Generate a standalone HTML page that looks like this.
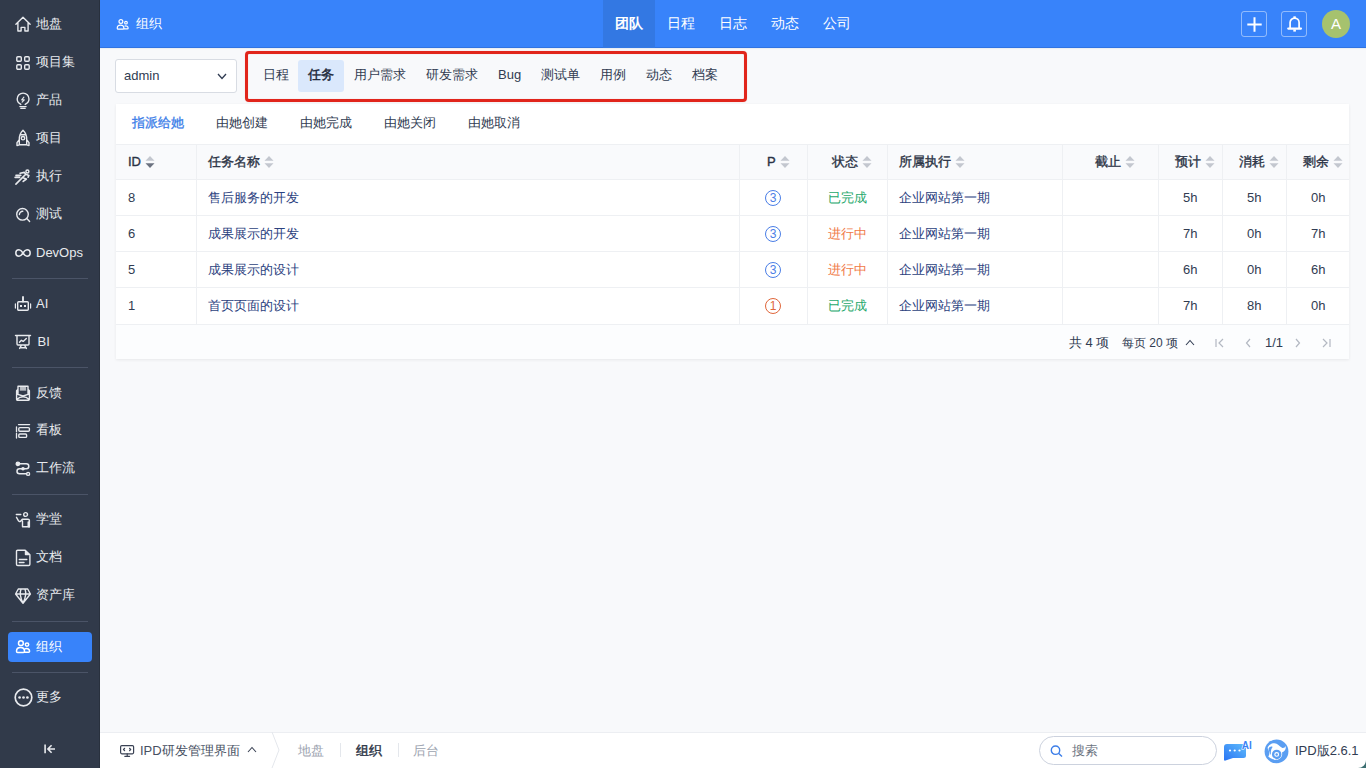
<!DOCTYPE html>
<html><head><meta charset="utf-8">
<style>
*{box-sizing:border-box;margin:0;padding:0}
html,body{width:1366px;height:768px;overflow:hidden}
body{font-family:"Liberation Sans",sans-serif;font-size:13px;color:#313c52;background:#f8f9fb;position:relative}
.a{position:absolute;white-space:nowrap}
#side{position:absolute;left:0;top:0;width:100px;height:768px;background:#313a4a}
.si{position:absolute;left:0;width:100px;height:20px;color:#e8eaee;line-height:20px;white-space:nowrap}
.si svg{position:absolute;left:15px;top:2px;width:16px;height:16px;fill:none;stroke:#e8eaee;stroke-width:1.4;stroke-linecap:round;stroke-linejoin:round;overflow:visible}
.si span{position:absolute;left:36px;top:0}
.sep{position:absolute;left:12px;width:76px;height:1px;background:#4b5467}
#act{position:absolute;left:8px;top:632px;width:84px;height:30px;background:#3883fa;border-radius:4px}
#hdr{position:absolute;left:100px;top:0;width:1266px;height:48px;background:#3883fa;box-shadow:inset 0 -1px 0 rgba(0,20,80,.14),0 1px 1px rgba(0,30,80,.05);z-index:2}
.nav{position:absolute;top:0;height:48px;line-height:46px;color:#fff;font-size:14px;padding:0 12px}
.hbtn{position:absolute;top:11px;width:26px;height:26px;border:1px solid rgba(255,255,255,.45);border-radius:3px}
#bot{position:absolute;left:100px;top:732px;width:1266px;height:36px;background:#fff;box-shadow:inset 0 1px 0 #eceef2}
.card{position:absolute;left:116px;top:104px;width:1233px;height:255px;background:#fff;box-shadow:0 1px 3px rgba(0,0,0,.07)}
.tab{position:absolute;top:60px;height:32px;line-height:30px;padding:0 10px;color:#313c52;border-radius:3px}
.ctab{position:absolute;top:113px;line-height:20px;color:#313c52}
.th{position:absolute;top:144px;height:36px;line-height:35px;color:#2b3345;-webkit-text-stroke:0.35px #2b3345}
.th svg{-webkit-text-stroke:0}
.vl{position:absolute;width:1px;background:#eef0f3}
.hl{position:absolute;height:1px;background:#eef0f3}
.td{position:absolute;line-height:20px}
.lk{color:#2c4280}
.sort{display:inline-block;width:10px;height:12px;vertical-align:-2px;margin-left:4px}
.circ{position:absolute;width:16px;height:16px;border:1px solid #4a7ee6;border-radius:50%;color:#4a7ee6;font-size:12px;line-height:14px;text-align:center}
</style></head><body>
<div id="side">
  <div class="si" style="top:14px"><svg viewBox="0 0 16 16"><path d="M0.9 8.3 L8 1.3 L15.1 8.3 M2.9 6.4 V15 H6.1 V11.4 H9.9 V15 H13.1 V6.4"/></svg><span>地盘</span></div>
  <div class="si" style="top:52px"><svg style="top:3px" viewBox="0 0 16 16"><rect x="1.8" y="1.8" width="4.5" height="4.5" rx="1"/><rect x="9.7" y="1.8" width="4.5" height="4.5" rx="1"/><rect x="1.8" y="9.7" width="4.5" height="4.5" rx="1"/><rect x="9.7" y="9.7" width="4.5" height="4.5" rx="1"/></svg><span>项目集</span></div>
  <div class="si" style="top:90px"><svg viewBox="0 0 16 16"><path d="M5.8 12.4 C3.6 11.2 2.2 9.3 2.2 7 A5.9 5.9 0 0 1 14 7 C14 9.3 12.6 11.2 10.2 12.4 M4.9 14.6 H11.1 M5.9 16.4 H10.1"/><path d="M8.9 5.2 L6.7 7.9 H9.3 L7.1 10.2" stroke-width="1.1"/></svg><span>产品</span></div>
  <div class="si" style="top:128px"><svg viewBox="0 0 16 16"><path d="M8 0.3 C5.2 2.8 4.3 6 4.3 9.5 V14.8 H11.7 V9.5 C11.7 6 10.8 2.8 8 0.3 Z M4.3 9.8 L2 12.6 V15.6 L4.3 14.8 M11.7 9.8 L14 12.6 V15.6 L11.7 14.8 M5.2 4.8 H10.8"/><circle cx="8" cy="8.2" r="1.7"/></svg><span>项目</span></div>
  <div class="si" style="top:166px"><svg viewBox="0 0 16 16"><circle cx="12.4" cy="3.5" r="1.5"/><path d="M5.1 5.3 L9.4 4.4 L10.8 6.2 L7.4 9.6 L11.4 11 L8.2 13.4 M7.4 9.6 L0.9 16.1 M10.8 6.2 L13.9 7.4 L13.1 9.2 M1 7.4 H5.8 M0.1 9.4 H4.6" stroke-width="1.6"/></svg><span>执行</span></div>
  <div class="si" style="top:204px"><svg viewBox="0 0 16 16"><circle cx="7.5" cy="8.3" r="5.8"/><path d="M11.8 12.6 L14.6 15.4 M4.4 8.5 A3.3 3.3 0 0 1 7.8 5.3"/></svg><span>测试</span></div>
  <div class="si" style="top:242px"><svg viewBox="0 0 16 16"><path d="M8 9 C6.6 6.7 5.5 5.8 4 5.8 A3.2 3.2 0 0 0 4 12.2 C5.5 12.2 6.6 11.3 8 9 C9.4 6.7 10.5 5.8 12 5.8 A3.2 3.2 0 0 1 12 12.2 C10.5 12.2 9.4 11.3 8 9 Z" stroke-width="1.5"/></svg><span style="top:0.5px">DevOps</span></div>
  <div class="sep" style="top:278px"></div>
  <div class="si" style="top:293px"><svg viewBox="0 0 16 16"><rect x="2.7" y="6.7" width="10.6" height="8.6" rx="1"/><path d="M8 2 V6.5" stroke-width="1.9"/><path d="M0.4 8.9 V13.1 M15.6 8.9 V13.1" stroke-width="1.2"/><rect x="5" y="10" width="2" height="2" fill="#e8eaee" stroke="none"/><rect x="9" y="10" width="2" height="2" fill="#e8eaee" stroke="none"/></svg><span style="top:0.5px">AI</span></div>
  <div class="si" style="top:331px"><svg viewBox="0 0 16 16"><path d="M0.5 2.5 H15.5 M2 2.5 V11 A1 1 0 0 0 3 12 H13 A1 1 0 0 0 14 11 V2.5 M6.3 12.3 L4.6 15.5 M9.7 12.3 L11.4 15.5 M4.8 14.8 H11.2 M4.5 9.2 L6.4 7.3 L8.2 8.4 L11.3 5.5"/></svg><span style="left:37.5px;top:0.5px">BI</span></div>
  <div class="sep" style="top:367px"></div>
  <div class="si" style="top:383px"><svg viewBox="0 0 16 16"><path d="M3 8.5 V1.2 H13 V8.5 M5.4 3 H10.6 M5.4 4.9 H10.6 M3 4.3 L1.6 5.8 V14.2 A1 1 0 0 0 2.6 15.2 H13.4 A1 1 0 0 0 14.4 14.2 V5.8 L13 4.3 M2 9.2 L8 11 L14 9.2 M2.5 14 C5 11.2 11 11.2 13.5 14"/></svg><span>反馈</span></div>
  <div class="si" style="top:420px"><svg viewBox="0 0 16 16"><path d="M3.5 2.6 H14.6 M1.5 5 V9.7 M1.5 11.4 V16" stroke-width="1.3"/><rect x="3.8" y="5.6" width="10.6" height="3.6" rx="1"/><rect x="3.8" y="12" width="7.8" height="3.4" rx="1"/></svg><span>看板</span></div>
  <div class="si" style="top:458px"><svg viewBox="0 0 16 16"><path d="M3 3.8 H11.3 A2.5 2.5 0 0 1 11.3 8.8 H4.5 A2.5 2.5 0 0 0 4.5 13.8 H11.6" stroke-width="1.5"/><circle cx="2.9" cy="3.8" r="1.7" fill="#e8eaee"/><circle cx="13.1" cy="13.9" r="1.5"/><circle cx="8" cy="8.8" r="1.1" fill="#e8eaee"/></svg><span>工作流</span></div>
  <div class="sep" style="top:494px"></div>
  <div class="si" style="top:509px"><svg viewBox="0 0 16 16"><circle cx="10.6" cy="3.5" r="1.9"/><path d="M1.3 3.5 H5.8 M1.5 6.3 L3.5 9.8 A1.3 1.3 0 0 0 5.6 10.2 L7.3 8.2 H13 A1.4 1.4 0 0 1 14.4 9.6 V16 H13.5 M7.5 10 V15.8 H13.2 V11"/></svg><span>学堂</span></div>
  <div class="si" style="top:547px"><svg viewBox="0 0 16 16"><path d="M2.6 1.2 H10.2 L14.9 5.8 V15.2 A1.3 1.3 0 0 1 13.6 16.5 H2.8 A1.3 1.3 0 0 1 1.5 15.2 V2.3 A1.1 1.1 0 0 1 2.6 1.2 Z M4.3 10.5 H11.8 M4.3 13.5 H9"/><path d="M10.5 2.5 L13.6 5.6 H10.5 Z" fill="#e8eaee"/></svg><span>文档</span></div>
  <div class="si" style="top:585px"><svg viewBox="0 0 16 16"><path d="M3.3 2 H12.7 L15.4 7 L8 16.3 L0.6 7 Z M0.8 7 H15.2 M6 2.2 C4.6 5.5 5 10 8 16 C11 10 11.4 5.5 10 2.2"/></svg><span>资产库</span></div>
  <div class="sep" style="top:621px"></div>
  <div id="act"></div>
  <div class="si" style="top:637px;color:#fff"><svg viewBox="0 0 16 16" style="stroke:#fff;stroke-width:1.5"><circle cx="5.9" cy="4.2" r="2.4"/><circle cx="12" cy="5.6" r="1.7"/><path d="M1.5 12.3 C1.5 9.8 3.4 8.6 5.5 8.6 C7.6 8.6 9.5 9.8 9.5 12.3 C9.5 13 9.1 13.4 8.4 13.4 H2.6 C1.9 13.4 1.5 13 1.5 12.3 Z M10.4 9.7 C12.6 9.1 14.6 10.3 14.6 12.2 C14.6 12.8 14.2 13.2 13.6 13.2 H9.8"/></svg><span>组织</span></div>
  <div class="sep" style="top:672px"></div>
  <div class="si" style="top:687px"><svg viewBox="0 0 19 19" style="left:13.5px;top:1.2px;width:19px;height:19px;stroke-width:1.7"><circle cx="9.5" cy="9.5" r="8.3"/><circle cx="5.6" cy="9.5" r="1.35" fill="#e8eaee" stroke="none"/><circle cx="9.5" cy="9.5" r="1.35" fill="#e8eaee" stroke="none"/><circle cx="13.4" cy="9.5" r="1.35" fill="#e8eaee" stroke="none"/></svg><span>更多</span></div>
  <svg class="a" style="left:0;top:0" width="100" height="768" fill="none" stroke="#e8eaee" stroke-width="1.6"><path d="M45.1 744.5 V753.2 M47.8 749 H55 M51.6 745.3 L47.9 749 L51.6 752.7"/></svg>
</div>
<div id="hdr">
  <svg class="a" style="left:15.7px;top:17.9px;overflow:visible" width="13.3" height="13.3" viewBox="0 0 16 16" fill="none" stroke="#fff" stroke-width="1.45"><circle cx="5.9" cy="4.2" r="2.3"/><circle cx="12" cy="5.6" r="1.6"/><path d="M1.5 12.3 C1.5 9.8 3.4 8.6 5.5 8.6 C7.6 8.6 9.5 9.8 9.5 12.3 C9.5 13 9.1 13.4 8.4 13.4 H2.6 C1.9 13.4 1.5 13 1.5 12.3 Z M10.4 9.7 C12.6 9.1 14.6 10.3 14.6 12.2 C14.6 12.8 14.2 13.2 13.6 13.2 H9.8"/></svg>
  <div class="a" style="left:36px;top:14px;line-height:20px;color:#fff;font-size:13px">组织</div>
  <div class="nav" style="left:503px;background:#3378e3;font-weight:bold">团队</div>
  <div class="nav" style="left:555px">日程</div>
  <div class="nav" style="left:607px">日志</div>
  <div class="nav" style="left:659px">动态</div>
  <div class="nav" style="left:711px">公司</div>
  <div class="hbtn" style="left:1141px"><svg class="a" style="left:5px;top:5px" width="15" height="15" viewBox="0 0 15 15" stroke="#fff" stroke-width="2"><path d="M7.5 0.3 V14.7 M0.3 7.5 H14.7"/></svg></div>
  <div class="hbtn" style="left:1181px"><svg class="a" style="left:5px;top:4px;overflow:visible" width="15" height="17" viewBox="0 0 15 17" fill="none" stroke="#fff"><path d="M3.1 12.3 V6.6 A4.5 4.5 0 0 1 12.1 6.6 V12.3" stroke-width="1.7"/><path d="M1.2 12.6 H14" stroke-width="2.1" stroke-linecap="round"/><path d="M7.6 0.3 V2.2" stroke-width="2.4"/><path d="M7.6 13.4 V15.6" stroke-width="2.6"/></svg></div>
  <div class="a" style="left:1222px;top:10px;width:28px;height:28px;border-radius:50%;background:#a6c26e;color:#fff;font-size:15px;line-height:28px;text-align:center">A</div>
</div>

<!-- sub header -->
<div class="a" style="left:115px;top:59px;width:122px;height:34px;background:#fff;border:1px solid #d8dce3;border-radius:3px"></div>
<div class="a" style="left:124px;top:66px;line-height:20px;color:#313c52">admin</div>
<svg class="a" style="left:217px;top:73px" width="10" height="7" viewBox="0 0 10 7" fill="none" stroke="#313c52" stroke-width="1.3"><path d="M1 1 L5 5.5 L9 1"/></svg>
<div class="a" style="left:245px;top:51px;width:502px;height:51px;border:3px solid #e1251b;border-radius:4px;box-shadow:0 0 1px rgba(230,40,30,.35),inset 0 0 1px rgba(230,40,30,.35)"></div>
<div class="tab" style="left:253px">日程</div>
<div class="tab" style="left:298px;background:#dae8fc;color:#1f2a3c;-webkit-text-stroke:0.45px #1f2a3c;border-radius:3px">任务</div>
<div class="tab" style="left:344px">用户需求</div>
<div class="tab" style="left:416px">研发需求</div>
<div class="tab" style="left:488px">Bug</div>
<div class="tab" style="left:531px">测试单</div>
<div class="tab" style="left:590px">用例</div>
<div class="tab" style="left:636px">动态</div>
<div class="tab" style="left:682px">档案</div>

<div class="card"></div>
<div class="ctab" style="left:132px;color:#3b7de8;-webkit-text-stroke:0.3px #3b7de8">指派给她</div>
<div class="ctab" style="left:216px">由她创建</div>
<div class="ctab" style="left:300px">由她完成</div>
<div class="ctab" style="left:384px">由她关闭</div>
<div class="ctab" style="left:468px">由她取消</div>

<!-- table -->
<div class="a" style="left:116px;top:144px;width:1233px;height:36px;background:#f9fafc"></div>
<div class="a" style="left:116px;top:325px;width:1233px;height:34px;background:#fcfdfe"></div>
<div class="hl" style="left:116px;top:144px;width:1233px"></div>
<div class="hl" style="left:116px;top:179px;width:1233px"></div>
<div class="hl" style="left:116px;top:215px;width:1233px"></div>
<div class="hl" style="left:116px;top:251px;width:1233px"></div>
<div class="hl" style="left:116px;top:287px;width:1233px"></div>
<div class="hl" style="left:116px;top:324px;width:1233px"></div>
<div class="vl" style="left:196px;top:144px;height:181px"></div>
<div class="vl" style="left:739px;top:144px;height:181px"></div>
<div class="vl" style="left:807px;top:144px;height:181px"></div>
<div class="vl" style="left:887px;top:144px;height:181px"></div>
<div class="vl" style="left:1062px;top:144px;height:181px"></div>
<div class="vl" style="left:1158px;top:144px;height:181px"></div>
<div class="vl" style="left:1222px;top:144px;height:181px"></div>
<div class="vl" style="left:1286px;top:144px;height:181px"></div>

<div class="th" style="left:128px">ID<svg class="sort" viewBox="0 0 10 12"><path d="M5 0 L9.5 4.8 H0.5 Z" fill="#c3c7cf"/><path d="M5 12 L9.5 7.2 H0.5 Z" fill="#6b7280"/></svg></div>
<div class="th" style="left:208px">任务名称<svg class="sort" viewBox="0 0 10 12"><path d="M5 0 L9.5 4.8 H0.5 Z M5 12 L9.5 7.2 H0.5 Z" fill="#c3c7cf"/></svg></div>
<div class="th" style="left:767px">P<svg class="sort" viewBox="0 0 10 12"><path d="M5 0 L9.5 4.8 H0.5 Z M5 12 L9.5 7.2 H0.5 Z" fill="#c3c7cf"/></svg></div>
<div class="th" style="left:832px">状态<svg class="sort" viewBox="0 0 10 12"><path d="M5 0 L9.5 4.8 H0.5 Z M5 12 L9.5 7.2 H0.5 Z" fill="#c3c7cf"/></svg></div>
<div class="th" style="left:899px">所属执行<svg class="sort" viewBox="0 0 10 12"><path d="M5 0 L9.5 4.8 H0.5 Z M5 12 L9.5 7.2 H0.5 Z" fill="#c3c7cf"/></svg></div>
<div class="th" style="left:1095px">截止<svg class="sort" viewBox="0 0 10 12"><path d="M5 0 L9.5 4.8 H0.5 Z M5 12 L9.5 7.2 H0.5 Z" fill="#c3c7cf"/></svg></div>
<div class="th" style="left:1175px">预计<svg class="sort" viewBox="0 0 10 12"><path d="M5 0 L9.5 4.8 H0.5 Z M5 12 L9.5 7.2 H0.5 Z" fill="#c3c7cf"/></svg></div>
<div class="th" style="left:1239px">消耗<svg class="sort" viewBox="0 0 10 12"><path d="M5 0 L9.5 4.8 H0.5 Z M5 12 L9.5 7.2 H0.5 Z" fill="#c3c7cf"/></svg></div>
<div class="th" style="left:1303px">剩余<svg class="sort" viewBox="0 0 10 12"><path d="M5 0 L9.5 4.8 H0.5 Z M5 12 L9.5 7.2 H0.5 Z" fill="#c3c7cf"/></svg></div>

<!-- rows -->
<div id="rows"></div>
<div class="td" style="left:128px;top:188px">8</div>
<div class="td lk" style="left:208px;top:188px">售后服务的开发</div>
<div class="circ" style="left:765px;top:190px;border-color:#4a7ee6;color:#4a7ee6">3</div>
<div class="td" style="left:828px;top:188px;color:#26a86b">已完成</div>
<div class="td lk" style="left:899px;top:188px">企业网站第一期</div>
<div class="td" style="left:1183px;top:188px">5h</div>
<div class="td" style="left:1247px;top:188px">5h</div>
<div class="td" style="left:1311px;top:188px">0h</div>
<div class="td" style="left:128px;top:224px">6</div>
<div class="td lk" style="left:208px;top:224px">成果展示的开发</div>
<div class="circ" style="left:765px;top:226px;border-color:#4a7ee6;color:#4a7ee6">3</div>
<div class="td" style="left:828px;top:224px;color:#f07a47">进行中</div>
<div class="td lk" style="left:899px;top:224px">企业网站第一期</div>
<div class="td" style="left:1183px;top:224px">7h</div>
<div class="td" style="left:1247px;top:224px">0h</div>
<div class="td" style="left:1311px;top:224px">7h</div>
<div class="td" style="left:128px;top:260px">5</div>
<div class="td lk" style="left:208px;top:260px">成果展示的设计</div>
<div class="circ" style="left:765px;top:262px;border-color:#4a7ee6;color:#4a7ee6">3</div>
<div class="td" style="left:828px;top:260px;color:#f07a47">进行中</div>
<div class="td lk" style="left:899px;top:260px">企业网站第一期</div>
<div class="td" style="left:1183px;top:260px">6h</div>
<div class="td" style="left:1247px;top:260px">0h</div>
<div class="td" style="left:1311px;top:260px">6h</div>
<div class="td" style="left:128px;top:296px">1</div>
<div class="td lk" style="left:208px;top:296px">首页页面的设计</div>
<div class="circ" style="left:765px;top:298px;border-color:#e0663a;color:#e0663a">1</div>
<div class="td" style="left:828px;top:296px;color:#26a86b">已完成</div>
<div class="td lk" style="left:899px;top:296px">企业网站第一期</div>
<div class="td" style="left:1183px;top:296px">7h</div>
<div class="td" style="left:1247px;top:296px">8h</div>
<div class="td" style="left:1311px;top:296px">0h</div>

<!-- pager -->
<div class="td" style="left:1069px;top:333px">共 4 项</div>
<div class="td" style="left:1122px;top:333px;font-size:12px">每页 20 项</div>
<svg class="a" style="left:1185px;top:339px" width="10" height="7" viewBox="0 0 10 7" fill="none" stroke="#313c52" stroke-width="1.1"><path d="M1 6 L5 1.5 L9 6"/></svg>
<svg class="a" style="left:1215px;top:338px" width="10" height="10" viewBox="0 0 10 10" fill="none" stroke="#b3b8c2" stroke-width="1.2"><path d="M1 1 V9 M8 1 L4 5 L8 9"/></svg>
<svg class="a" style="left:1245px;top:338px" width="7" height="10" viewBox="0 0 7 10" fill="none" stroke="#b3b8c2" stroke-width="1.2"><path d="M5 1 L1.5 5 L5 9"/></svg>
<div class="td" style="left:1265px;top:333px">1/1</div>
<svg class="a" style="left:1294px;top:338px" width="7" height="10" viewBox="0 0 7 10" fill="none" stroke="#b3b8c2" stroke-width="1.2"><path d="M2 1 L5.5 5 L2 9"/></svg>
<svg class="a" style="left:1321px;top:338px" width="10" height="10" viewBox="0 0 10 10" fill="none" stroke="#b3b8c2" stroke-width="1.2"><path d="M9 1 V9 M2 1 L6 5 L2 9"/></svg>

<!-- bottom bar -->
<div id="bot">
  <svg class="a" style="left:20px;top:13px" width="15" height="13" viewBox="0 0 15 13" fill="none" stroke="#3a4254" stroke-width="1.2" stroke-linecap="round" stroke-linejoin="round"><rect x="0.6" y="0.6" width="13" height="8.2" rx="1.2"/><path d="M4.8 11.3 H9.6 M7.2 8.8 V11.3 M4.6 3.3 L3.5 4.5 L4.6 5.7 M9.6 3.3 L10.7 4.5 L9.6 5.7"/></svg>
  <div class="a" style="left:40px;top:9px;line-height:20px;font-size:13px;color:#475062">IPD研发管理界面</div>
  <svg class="a" style="left:147px;top:14px" width="10" height="7" viewBox="0 0 10 7" fill="none" stroke="#3a4254" stroke-width="1.1"><path d="M1 6 L5 1.5 L9 6"/></svg>
  <svg class="a" style="left:170px;top:0" width="14" height="36" viewBox="0 0 14 36" fill="none" stroke="#e4e7ec" stroke-width="1"><path d="M2 0 L9 18 L2 36"/></svg>
  <div class="a" style="left:198px;top:9px;line-height:20px;color:#9ca3af">地盘</div>
  <div class="a" style="left:240px;top:11px;width:1px;height:14px;background:#e4e7ec"></div>
  <div class="a" style="left:256px;top:9px;line-height:20px;color:#2b3345;-webkit-text-stroke:0.4px #2b3345">组织</div>
  <div class="a" style="left:298px;top:11px;width:1px;height:14px;background:#e4e7ec"></div>
  <div class="a" style="left:313px;top:9px;line-height:20px;color:#9ca3af">后台</div>
  <div class="a" style="left:939px;top:4px;width:178px;height:29px;border:1px solid #ccd2de;border-radius:15px"></div>
  <svg class="a" style="left:950px;top:13px" width="14" height="12" viewBox="0 0 14 12" fill="none" stroke="#3b7de8" stroke-width="1.4"><circle cx="5.5" cy="5.2" r="4.2"/><path d="M8.5 8.3 L12 11.5"/></svg>
  <div class="a" style="left:972px;top:9px;line-height:20px;color:#6b7280">搜索</div>
  <svg class="a" style="left:1123px;top:9px" width="32" height="28" viewBox="0 0 32 28"><defs><linearGradient id="g1" x1="0" y1="1" x2="1" y2="0"><stop offset="0" stop-color="#2a74f4"/><stop offset="1" stop-color="#5fbcfb"/></linearGradient></defs><path d="M4 3 H20.5 A2.5 2.5 0 0 1 23 5.5 V14.5 A2.5 2.5 0 0 1 20.5 17 H10 L2.5 19.5 A1 1 0 0 1 1 18.5 V6 A3 3 0 0 1 4 3 Z" fill="url(#g1)"/><circle cx="7" cy="9.5" r="1.1" fill="#fff"/><circle cx="11.7" cy="9.5" r="1.1" fill="#fff"/><circle cx="16.5" cy="9.5" r="1.1" fill="#fff"/><text x="18.8" y="7.6" font-family="Liberation Sans" font-size="10" font-weight="bold" fill="#3b82f6" stroke="#fff" stroke-width="1.2" paint-order="stroke">AI</text></svg>
  <svg class="a" style="left:1164px;top:7px" width="25" height="25" viewBox="0 0 25 25"><circle cx="12.5" cy="12.4" r="11.9" fill="#5a9ef2"/><path d="M3.5 9 C5 5.5 8 4 10.5 4.2 C13.5 4.4 15.5 7 18 8.8 C19.5 9.5 21 8.5 21.8 7 C22 10 21 12.5 18 13.5 C19 17.5 16 20.8 12.5 20.8 C8.5 20.8 5 18.5 4.3 17.2 C6 16 5.5 12 3.5 9 Z" fill="#fff"/><path d="M4.6 9.4 C5.6 7.8 7.4 7 8.6 8 C7.2 9.6 6.6 12.5 6.9 16 C5.6 14.2 5 12 4.6 9.4 Z" fill="#5a9ef2"/><circle cx="12.7" cy="15.4" r="3.6" fill="none" stroke="#5a9ef2" stroke-width="2.3"/><path d="M8.6 17.6 C9.5 19.5 11 20 12.5 19.9 L10.5 21 Z" fill="#fff"/><circle cx="12.7" cy="15.5" r="1.2" fill="#5a9ef2"/></svg>
  <div class="a" style="left:1195px;top:9px;line-height:20px;color:#313c52">IPD版2.6.1</div>
</div>
<div class="a" style="left:99px;top:0;width:1px;height:768px;background:#29313e"></div>
<svg class="a" style="left:1358px;top:760px" width="8" height="8" viewBox="0 0 8 8"><path d="M8 0 V8 H0 A8 8 0 0 0 8 0 Z" fill="#3d6f72"/></svg>
</body></html>
